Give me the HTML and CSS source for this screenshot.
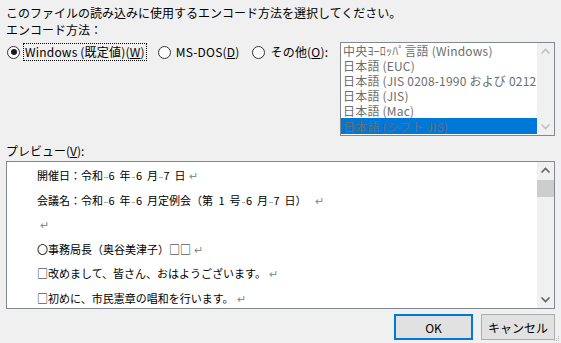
FILE: index.html
```html
<!DOCTYPE html>
<html lang="ja">
<head>
<meta charset="utf-8">
<link rel="stylesheet" href="styles.css">
</head>
<body>
<div class="dialog">
  <div class="line instr">このファイルの読み込みに使用するエンコード方法を選択してください。</div>
  <div class="line label">エンコード方法：</div>
  <div class="enc-row">
    <div class="radios">
      <div class="radio"><span class="circle checked"></span><span class="rtext focus">Windows (既定値)(<u>W</u>)</span></div>
      <div class="radio"><span class="circle"></span><span class="rtext">MS-DOS(<u>D</u>)</span></div>
      <div class="radio"><span class="circle"></span><span class="rtext">その他(<u>O</u>):</span></div>
    </div>
    <div class="listbox">
      <ul class="items">
        <li><span>中央ﾖｰﾛｯﾊﾟ言語 (Windows)</span></li>
        <li><span>日本語 (EUC)</span></li>
        <li><span>日本語 (JIS 0208-1990 および 0212</span></li>
        <li><span>日本語 (JIS)</span></li>
        <li><span>日本語 (Mac)</span></li>
        <li class="sel"><span>日本語 (シフト JIS)</span></li>
      </ul>
      <div class="vscroll dis">
        <svg class="chev" width="17" height="17" viewBox="0 0 17 17"><polyline points="4.5,10.5 8.5,6.5 12.5,10.5" fill="none" stroke="currentColor" stroke-width="1.6"/></svg>
        <svg class="chev" width="17" height="17" viewBox="0 0 17 17"><polyline points="4.5,6.5 8.5,10.5 12.5,6.5" fill="none" stroke="currentColor" stroke-width="1.6"/></svg>
      </div>
    </div>
  </div>
  <div class="line label plabel">プレビュー(<u>V</u>):</div>
  <div class="preview">
    <div class="ptext">
      <p>開催日：令和<i class="sp"></i><span class="d">6</span><span class="hs"> </span>年<i class="sp"></i><span class="d">6</span><span class="hs"> </span>月<i class="sp"></i><span class="d">7</span><span class="hs"> </span>日<b>↵</b></p>
      <p>会議名：令和<i class="sp"></i><span class="d">6</span><span class="hs"> </span>年<i class="sp"></i><span class="d">6</span><span class="hs"> </span>月定例会（第<span class="hs"> </span><span class="d">1</span><span class="hs"> </span>号<i class="sp"></i><span class="d">6</span><span class="hs"> </span>月<i class="sp"></i><span class="d">7</span><span class="hs"> </span>日）<span class="hs"> </span><b>↵</b></p>
      <p><b>↵</b></p>
      <p>〇事務局長（奥谷美津子）□□<b>↵</b></p>
      <p>□改めまして、皆さん、おはようございます。<b>↵</b></p>
      <p>□初めに、市民憲章の唱和を行います。<b>↵</b></p>
    </div>
    <div class="vscroll">
      <svg class="chev" width="17" height="17" viewBox="0 0 17 17"><polyline points="4.5,10.5 8.5,6.5 12.5,10.5" fill="none" stroke="currentColor" stroke-width="1.6"/></svg>
      <div class="track"><div class="thumb"></div></div>
      <svg class="chev" width="17" height="17" viewBox="0 0 17 17"><polyline points="4.5,6.5 8.5,10.5 12.5,6.5" fill="none" stroke="currentColor" stroke-width="1.6"/></svg>
    </div>
  </div>
  <div class="buttons">
    <button class="btn default">OK</button>
    <button class="btn">キャンセル</button>
  </div>
  <svg class="grip" width="6" height="6" viewBox="0 0 6 6"><rect x="4" y="0" width="1" height="1" fill="#bbb"/><rect x="2" y="2" width="1" height="1" fill="#bbb"/><rect x="4" y="2" width="1" height="1" fill="#bbb"/><rect x="0" y="4" width="1" height="1" fill="#bbb"/><rect x="2" y="4" width="1" height="1" fill="#bbb"/><rect x="4" y="4" width="1" height="1" fill="#bbb"/></svg>
</div>
</body>
</html>
```

FILE: styles.css
```css
html, body {
  margin: 0;
  padding: 0;
  background: #f0f0f0;
}
body {
  width: 561px;
  height: 343px;
  overflow: hidden;
  font-family: "Noto Sans CJK JP", "Noto Sans", sans-serif;
  font-size: 12px;
  color: #000;
}
.dialog {
  position: relative;
  height: 343px;
  box-sizing: border-box;
  padding: 4px 6px 0 6px;
  display: flex;
  flex-direction: column;
}
.line {
  height: 16px;
  line-height: 16px;
  white-space: nowrap;
}
.label { margin-top: 2px; }
.instr { margin-top: 1px; margin-bottom: -1px; }
.enc-row {
  margin-top: 4px;
  display: flex;
  justify-content: space-between;
  align-items: flex-start;
}
.radios {
  display: flex;
  gap: 10px;
  padding-top: 1px;
}
.radio {
  display: flex;
  align-items: center;
  height: 18px;
  gap: 3px;
}
.circle {
  width: 11px;
  height: 11px;
  border: 1px solid #333;
  border-radius: 50%;
  background: #fff;
  position: relative;
  margin-left: 1px;
}
.circle.checked::after {
  content: "";
  position: absolute;
  left: 2.5px;
  top: 2.5px;
  width: 6px;
  height: 6px;
  border-radius: 50%;
  background: #1a1a1a;
}
.rtext {
  line-height: 16px;
  padding: 0 1px;
  border: 1px dotted transparent;
  white-space: nowrap;
  letter-spacing: 0.2px;
}
.rtext.focus { border-color: #000; }
.listbox {
  width: 215px;
  height: 94px;
  box-sizing: border-box;
  border: 1px solid #828790;
  background: #fff;
  display: flex;
}
.items {
  list-style: none;
  margin: 0;
  padding: 0;
  flex: 1;
  overflow: hidden;
  min-width: 0;
}
.items li {
  height: 15px;
  padding-left: 2px;
  color: #6d6d6d;
  white-space: nowrap;
  overflow: hidden;
  display: flex;
  align-items: center;
}
.items li span {
  display: block;
  line-height: 15px;
  height: 15px;
  letter-spacing: 0.2px;
}
.items li.sel {
  background: #0078d7;
  height: 16px;
}
.vscroll {
  width: 17px;
  background: #f0f0f0;
  display: flex;
  flex-direction: column;
  justify-content: space-between;
  color: #606060;
}
.vscroll.dis { color: #c0c0c0; }
.chev { display: block; }
.plabel { margin-top: 7px; }
.preview {
  margin-top: 2px;
  height: 148px;
  box-sizing: border-box;
  border: 1px solid #828790;
  background: #fff;
  display: flex;
}
.ptext {
  flex: 1;
  padding: 1px 0 0 30px;
  font-size: 11px;
  overflow: hidden;
}
.ptext p {
  margin: 0;
  height: 24.5px;
  line-height: 24.5px;
  white-space: nowrap;
}
.ptext .sp {
  display: inline-block;
  width: 0.5em;
  height: 1em;
  vertical-align: middle;
  position: relative;
}
.ptext .sp::after {
  content: "";
  position: absolute;
  left: 1px;
  right: 1px;
  top: 50%;
  height: 1px;
  background: #a8a8a8;
}
.ptext .d {
  display: inline-block;
  width: 0.5em;
  text-align: center;
}
.ptext .hs {
  display: inline-block;
  width: 0.5em;
}
.ptext b {
  font-weight: normal;
  color: #8a8a8a;
  font-size: 11px;
  margin-left: 3px;
}
.track {
  flex: 1;
}
.thumb {
  margin-top: 1px;
  height: 17px;
  background: #cdcdcd;
}
.buttons {
  margin-top: 5px;
  display: flex;
  justify-content: flex-end;
  gap: 8px;
}
.btn {
  height: 26px;
  box-sizing: border-box;
  background: #e1e1e1;
  border: 1px solid #adadad;
  font-family: "Noto Sans CJK JP", "Noto Sans", sans-serif;
  font-size: 12px;
  color: #000;
  padding: 0;
  width: 74px;
}
.btn.default {
  width: 79px;
  border: 2px solid #0078d7;
}
.grip {
  position: absolute;
  right: 1px;
  bottom: 1px;
}
```
